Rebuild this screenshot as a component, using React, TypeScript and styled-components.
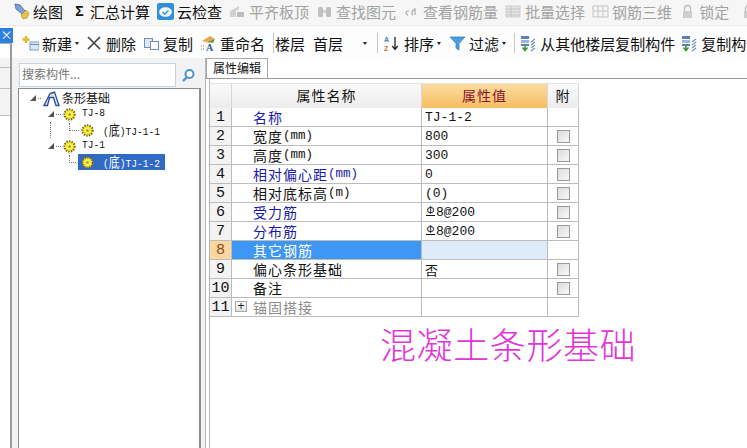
import React from "react";
import styled, { createGlobalStyle } from "styled-components";

const cjk = `"Noto Sans CJK SC", "Liberation Sans", sans-serif`;
const mono = `"Liberation Mono", "Noto Sans CJK SC", monospace`;

const Global = createGlobalStyle`
  html, body { margin: 0; padding: 0; background: #fff; }
  body { width: 747px; height: 448px; overflow: hidden; font-family: ${cjk}; color: #111; }
`;

const Page = styled.div`
  width: 747px;
  height: 448px;
  display: flex;
  flex-direction: column;
  overflow: hidden;
`;

const TopBar = styled.div`
  height: 25px;
  flex: none;
  display: flex;
  align-items: center;
  box-sizing: border-box;
  padding: 0 0 3px 13px;
  background: #f6f6f6;
  white-space: nowrap;
  font-size: 15px;
  line-height: 1;
`;

const TopItem = styled.div<{ $off?: boolean; $gap?: number }>`
  flex: none;
  display: flex;
  align-items: center;
  gap: 3px;
  margin-right: ${(p) => p.$gap ?? 7}px;
  color: ${(p) => (p.$off ? "#a2a2a2" : "#111")};
`;

const Sigma = styled.span`
  width: 15px;
  text-align: center;
  font-family: "Liberation Sans", sans-serif;
  font-weight: 700;
  font-size: 14px;
`;

const ToolBar = styled.div`
  height: 33px;
  flex: none;
  display: flex;
  align-items: center;
  box-sizing: border-box;
  padding-top: 2px;
  background: #fdfdfd;
  white-space: nowrap;
  font-size: 15px;
  line-height: 1;
  border-top: 1px solid #ececec;
`;

const Stub = styled.div`
  width: 13px;
  flex: none;
  align-self: stretch;
  display: flex;
  flex-direction: column;
  margin-right: 8px;
`;

const CloseTab = styled.div`
  height: 15px;
  flex: none;
  background: #2f7fe0;
  color: #fff;
  font-size: 12px;
  line-height: 14px;
  text-align: center;
`;

const StubBox = styled.div`
  flex: 1;
  width: 12px;
  box-sizing: border-box;
  border-top: 1px solid #b0b0b0;
  border-right: 2px solid #9c9c9c;
  background: #fff;
`;

const ToolItem = styled.div<{ $gap?: number }>`
  flex: none;
  display: flex;
  align-items: center;
  gap: 3px;
  margin-right: ${(p) => p.$gap ?? 7}px;
`;

const Caret = styled.span`
  width: 0;
  height: 0;
  border-left: 2.5px solid transparent;
  border-right: 2.5px solid transparent;
  border-top: 3px solid #222;
`;

const Sep = styled.span<{ $after: number }>`
  flex: none;
  width: 1px;
  height: 20px;
  background: #c8c8c8;
  margin-right: ${(p) => p.$after}px;
`;

const Body = styled.div`
  flex: 1;
  display: flex;
  min-height: 0;
`;

const LeftGutter = styled.div`
  width: 12px;
  flex: none;
  box-sizing: border-box;
  background: #fff;
  border-right: 2px solid #9c9c9c;
`;

const GutterRow = styled.div<{ $h: number }>`
  height: ${(p) => p.$h}px;
  box-sizing: border-box;
  background: #f3f3f3;
  border-bottom: 1px solid #bdbdbd;
`;

const Side = styled.div`
  width: 193px;
  flex: none;
  padding: 5px 4px 0 6px;
  box-sizing: border-box;
  background: #f2f2f2;
  display: flex;
  flex-direction: column;
`;

const SearchRow = styled.div`
  display: flex;
  height: 25px;
  flex: none;
`;

const SearchInput = styled.div`
  width: 157px;
  height: 24px;
  margin-left: 1px;
  background: #fff;
  border: 1px solid #c6d2de;
  box-sizing: border-box;
  color: #777;
  font-size: 12px;
  line-height: 20px;
  padding-left: 2px;
`;

const SearchBtn = styled.div`
  flex: 1;
  display: flex;
  align-items: center;
  justify-content: center;
`;

const Tree = styled.div`
  flex: 1;
  background: #fff;
  border-left: 1px solid #8d8d8d;
  border-top: 1px solid #8d8d8d;
  border-right: 2px solid #8d8d8d;
  padding-top: 1px;
`;

const TreeRow = styled.div<{ $indent: number; $trunk?: boolean }>`
  height: 16px;
  position: relative;
  padding-left: ${(p) => p.$indent}px;
  display: flex;
  align-items: center;
  white-space: nowrap;
  &::before {
    content: "";
    display: ${(p) => (p.$trunk ? "block" : "none")};
    position: absolute;
    left: 31px;
    top: 0;
    height: 16px;
    border-left: 1px dotted #777;
  }
`;

const Arrow = styled.span`
  flex: none;
  width: 0;
  height: 0;
  border-left: 6px solid transparent;
  border-bottom: 6px solid #555;
  margin-right: 2px;
`;

const Dots = styled.span<{ $w: number; $up?: boolean }>`
  flex: none;
  position: relative;
  width: ${(p) => p.$w}px;
  border-top: 1px dotted #777;
  margin-right: 2px;
  &::before {
    content: "";
    display: ${(p) => (p.$up ? "block" : "none")};
    position: absolute;
    left: 0;
    bottom: 0;
    height: 8px;
    border-left: 1px dotted #777;
  }
`;

const RootLabel = styled.span`
  margin-left: 2px;
  font-size: 12px;
  line-height: 1;
`;

const TreeLabel = styled.span<{ $left: number }>`
  margin-left: ${(p) => p.$left}px;
  font-family: ${mono};
  font-size: 9.6px;
  line-height: 1;
  transform: scaleY(1.2);
`;

const SelectedRow = styled.span`
  display: inline-flex;
  align-items: center;
  height: 16px;
  padding: 0 5px 0 3px;
  background: #316ac5;
  color: #fff;
`;

const Under = styled.span`
  font-family: ${cjk};
  font-size: 11px;
`;

const Main = styled.div`
  flex: 1;
  display: flex;
  flex-direction: column;
  background: #fff;
  border-left: 1px solid #b5b5b5;
  min-width: 0;
`;

const TabStrip = styled.div`
  height: 21px;
  flex: none;
  box-sizing: border-box;
  display: flex;
  align-items: flex-end;
  border-bottom: 1px solid #9a9a9a;
`;

const Tab = styled.div`
  width: 62px;
  height: 20px;
  box-sizing: border-box;
  text-align: center;
  line-height: 18px;
  font-size: 12px;
  border: 1px solid #aaa;
  border-bottom: none;
  background: #fff;
`;

const Pane = styled.div`
  flex: 1;
  margin-left: 3px;
  border-left: 1px solid #b5b5b5;
  padding-top: 4px;
`;

const Grid = styled.div`
  width: 369px;
  display: grid;
  grid-template-columns: 22px 190px 126px 31px;
  grid-template-rows: 24px repeat(11, 19px);
  border-top: 1px solid #e4e4e4;
  margin-bottom: 6px;
`;

const HeadCell = styled.div<{ $active?: boolean }>`
  display: flex;
  align-items: center;
  justify-content: center;
  padding-bottom: 2px;
  font-size: 14px;
  line-height: 1;
  letter-spacing: 1px;
  box-sizing: border-box;
  border-right: 1px solid #d6d6d6;
  color: ${(p) => (p.$active ? "#8a1430" : "#111")};
  background: ${(p) =>
    p.$active
      ? "linear-gradient(#fbdc9f, #f6bd62)"
      : "linear-gradient(#fafafa, #ececec)"};
`;

const NumCell = styled.div<{ $active?: boolean }>`
  display: flex;
  align-items: center;
  justify-content: center;
  font-size: 15px;
  font-family: "Liberation Mono", monospace;
  box-sizing: border-box;
  background: ${(p) => (p.$active ? "#fad7a0" : "#f3f3f3")};
  color: ${(p) => (p.$active ? "#8a4a10" : "#111")};
  border-right: 1px solid #bcbcbc;
  border-bottom: 1px solid #bcbcbc;
`;

const NameCell = styled.div<{ $tone?: string; $active?: boolean }>`
  position: relative;
  display: flex;
  align-items: center;
  padding-left: 21px;
  box-sizing: border-box;
  font-size: 14px;
  line-height: 1;
  letter-spacing: 1px;
  white-space: nowrap;
  color: ${(p) => (p.$active ? "#fff" : p.$tone ?? "#111")};
  background: ${(p) => (p.$active ? "#3f97f5" : "#fff")};
  border-right: 1px solid #bcbcbc;
  border-bottom: 1px solid #bcbcbc;
`;

const Unit = styled.span`
  font-family: "Liberation Mono", monospace;
  font-size: 12.5px;
  letter-spacing: 0;
`;

const Expander = styled.span`
  position: absolute;
  left: 3px;
  top: 3px;
  width: 12px;
  height: 11px;
  box-sizing: border-box;
  border: 1px solid #a8a8a8;
  background: linear-gradient(#fff, #e2e2e2);
  color: #111;
  font-size: 12px;
  line-height: 8px;
  letter-spacing: 0;
  text-align: center;
  font-family: "Liberation Sans", sans-serif;
`;

const ValueCell = styled.div<{ $active?: boolean }>`
  display: flex;
  align-items: center;
  padding-left: 3px;
  box-sizing: border-box;
  font-size: 13px;
  font-family: ${mono};
  background: ${(p) => (p.$active ? "#ddebfb" : "#fff")};
  border-right: 1px solid #bcbcbc;
  border-bottom: 1px solid #bcbcbc;
  white-space: nowrap;
`;

const AttachCell = styled.div`
  display: flex;
  align-items: center;
  justify-content: center;
  box-sizing: border-box;
  border-right: 1px solid #bcbcbc;
  border-bottom: 1px solid #bcbcbc;
`;

const Check = styled.span`
  width: 13px;
  height: 13px;
  box-sizing: border-box;
  border: 1px solid #9a9a9a;
  background: linear-gradient(135deg, #dcdcdc, #f8f8f8);
`;

const RebarMark = styled.span`
  width: 9px;
  height: 9px;
  margin: 0 1px 3px 1px;
  font-family: "Liberation Sans", sans-serif;
  font-size: 10px;
  line-height: 9px;
  text-align: center;
  border-bottom: 1px solid #111;
`;

const Caption = styled.div`
  margin-left: 170px;
  color: #e235d8;
  font-family: "Noto Sans CJK SC", serif;
  font-size: 36px;
  font-weight: 300;
  letter-spacing: 0.6px;
  line-height: 40px;
  white-space: nowrap;
`;

const Flower = () => (
  <svg width="13" height="13" viewBox="0 0 13 13">
    <circle cx="6.5" cy="6.5" r="5.2" fill="#f6e83a" stroke="#6f6410" strokeWidth="2" strokeDasharray="1.4 1.2" />
    <circle cx="6.5" cy="6.5" r="3" fill="#fbf04e" />
    <circle cx="6.5" cy="6.5" r="1.3" fill="#a8962a" />
  </svg>
);

const FootingIcon = () => (
  <svg width="17" height="17" viewBox="0 0 17 17">
    <path d="M1 15.5h3.5l2-8h4l2.5 8H16L11.5 2 7 3.5z" fill="#dfe9f6" stroke="#2a4f96" strokeWidth="1.3" />
    <path d="M8 4l3-1.5" stroke="#2a4f96" />
  </svg>
);

const PencilIcon = () => (
  <svg width="17" height="17" viewBox="0 0 17 17">
    <path d="M2 1l5 1 5 6-3 3-6-5z" fill="#7f9fd8" stroke="#47659f" strokeWidth="0.8" />
    <path d="M8 12l5-5 3 3-2 5-4 1z" fill="#e9c24a" stroke="#a88a2a" strokeWidth="0.6" />
  </svg>
);

const CloudIcon = () => (
  <svg width="17" height="17" viewBox="0 0 17 17">
    <rect width="17" height="17" rx="2" fill="#2f92d8" />
    <ellipse cx="8.5" cy="9" rx="6.4" ry="4.8" fill="#f2f8fd" />
    <path d="M5.5 9l2.2 2 3.8-3.6" fill="none" stroke="#2f92d8" strokeWidth="1.4" />
  </svg>
);

const GrayIcon = ({ kind }: { kind: string }) => (
  <svg width="17" height="15" viewBox="0 0 17 15">
    {kind === "board" && (
      <>
        <path d="M1 13V7l9-5v3l-3 2v6z" fill="#d2d2d2" />
        <rect x="8" y="8" width="7" height="5" fill="#bdbdbd" />
      </>
    )}
    {kind === "binoc" && (
      <>
        <rect x="2" y="3" width="5" height="10" rx="1.5" fill="#c0c0c0" />
        <rect x="10" y="3" width="5" height="10" rx="1.5" fill="#c0c0c0" />
        <rect x="7" y="6" width="3" height="3" fill="#d4d4d4" />
      </>
    )}
    {kind === "rebar" && <path d="M5 11c-3 0-2-5 1-4M10 11c-2-1-1-5 2-6v6" fill="none" stroke="#b5b5b5" strokeWidth="1.4" />}
    {kind === "batch" && (
      <>
        <rect x="1" y="2" width="14" height="11" fill="#e6e6e6" stroke="#cdcdcd" />
        <path d="M1 5h14M1 8h14M1 11h14M6 2v11" stroke="#c4c4c4" />
      </>
    )}
    {kind === "grid3d" && (
      <path d="M1 2h15v11H1zM6 2v11M11 2v11M1 7h15" fill="none" stroke="#c4c4c4" />
    )}
    {kind === "lock" && (
      <>
        <path d="M5.5 7V4.5a3 3 0 0 1 6 0V7" fill="none" stroke="#bdbdbd" strokeWidth="1.3" />
        <rect x="4" y="7" width="9" height="7" fill="#cdcdcd" />
      </>
    )}
  </svg>
);

const NewIcon = () => (
  <svg width="18" height="16" viewBox="0 0 18 16">
    <path d="M5 1v7M1.5 4.5h7" stroke="#e3b52a" strokeWidth="2.4" />
    <rect x="9" y="7" width="9" height="8" fill="#dbe8f6" stroke="#7d9ec6" />
    <path d="M9 9.5h9" stroke="#6f8fb8" />
  </svg>
);

const CrossIcon = () => (
  <svg width="17" height="15" viewBox="0 0 17 15">
    <path d="M2 1l12 12M14 1L2 13" stroke="#444" strokeWidth="1.7" />
  </svg>
);

const CopyIcon = () => (
  <svg width="17" height="13" viewBox="0 0 17 13">
    <rect x="1.5" y="1.5" width="8" height="9" fill="#dde8f6" stroke="#6f8fb8" />
    <rect x="7.5" y="4.5" width="8" height="8" fill="#fff" stroke="#6f8fb8" />
  </svg>
);

const RenameIcon = () => (
  <svg width="17" height="16" viewBox="0 0 17 16">
    <path d="M2 6l8-5 5 3-6 4z" fill="#e3a94a" />
    <path d="M8 7l7-3-2 4z" fill="#5c9a52" />
    <text x="6" y="15.5" fontSize="10" fontFamily="Liberation Serif, serif" fontWeight="700" fill="#2a5aa8">A</text>
    <path d="M1 11h3M1 14h3" stroke="#888" strokeDasharray="1 1" />
  </svg>
);

const SortIcon = () => (
  <svg width="18" height="17" viewBox="0 0 18 17">
    <text x="1" y="7" fontSize="7" fontFamily="Liberation Sans, sans-serif" fontWeight="700" fill="#4a78b8">A</text>
    <text x="1" y="16" fontSize="7" fontFamily="Liberation Sans, sans-serif" fontWeight="700" fill="#c0752a">Z</text>
    <path d="M12 2v12M9.3 11l2.7 3.5 2.7-3.5" fill="none" stroke="#222" strokeWidth="1.3" />
  </svg>
);

const FilterIcon = () => (
  <svg width="17" height="15" viewBox="0 0 17 15">
    <path d="M1 1h15L10 7.5V14l-3-2V7.5z" fill="#4d9fe0" stroke="#2f76b8" strokeWidth="0.7" />
  </svg>
);

const CopyFloorIcon = () => (
  <svg width="17" height="17" viewBox="0 0 17 17">
    <rect x="1" y="1" width="8" height="3" fill="#5a7fb4" />
    <rect x="1" y="5" width="8" height="3" fill="#9ab6d6" />
    <rect x="1" y="9" width="8" height="2" fill="#5a7fb4" />
    <path d="M5 11v3M2.5 12.5L5 15.5l2.5-3" fill="none" stroke="#3a9a3a" strokeWidth="1.6" />
    <path d="M11 7l4-3M11 10l4-3M11 13l4-3M11 16l4-3" stroke="#6f93bb" strokeWidth="1.2" />
  </svg>
);

const SearchGlass = () => (
  <svg width="15" height="15" viewBox="0 0 15 15">
    <circle cx="8.5" cy="6" r="4" fill="#fff" stroke="#4d93c9" strokeWidth="2" />
    <path d="M5.5 9.5L2 13" stroke="#4d93c9" strokeWidth="2.4" />
  </svg>
);

type Row = { name: string; unit?: string; value?: string; rebar?: boolean; check?: boolean; tone?: string };

const blue = "#1a1aa6";
const rows: Row[] = [
  { name: "名称", value: "TJ-1-2", tone: blue },
  { name: "宽度", unit: "(mm)", value: "800", check: true },
  { name: "高度", unit: "(mm)", value: "300", check: true },
  { name: "相对偏心距", unit: "(mm)", value: "0", check: true, tone: blue },
  { name: "相对底标高", unit: "(m)", value: "(0)", check: true },
  { name: "受力筋", value: "8@200", rebar: true, check: true, tone: blue },
  { name: "分布筋", value: "8@200", rebar: true, check: true, tone: blue },
  { name: "其它钢筋" },
  { name: "偏心条形基础", value: "否", check: true },
  { name: "备注", check: true },
];

export default function App() {
  return (
    <Page>
      <Global />
      <TopBar>
        <TopItem $gap={9}><PencilIcon />绘图</TopItem>
        <TopItem><Sigma>Σ</Sigma>汇总计算</TopItem>
        <TopItem><CloudIcon />云检查</TopItem>
        <TopItem $off><GrayIcon kind="board" />平齐板顶</TopItem>
        <TopItem $off><GrayIcon kind="binoc" />查找图元</TopItem>
        <TopItem $off><GrayIcon kind="rebar" />查看钢筋量</TopItem>
        <TopItem $off><GrayIcon kind="batch" />批量选择</TopItem>
        <TopItem $off><GrayIcon kind="grid3d" />钢筋三维</TopItem>
        <TopItem $off $gap={11}><GrayIcon kind="lock" />锁定</TopItem>
        <TopItem $off><GrayIcon kind="lock" /></TopItem>
      </TopBar>
      <ToolBar>
        <Stub>
          <CloseTab>×</CloseTab>
          <StubBox />
        </Stub>
        <ToolItem><NewIcon />新建<Caret /></ToolItem>
        <ToolItem><CrossIcon />删除</ToolItem>
        <ToolItem><CopyIcon />复制</ToolItem>
        <ToolItem $gap={8}><RenameIcon />重命名</ToolItem>
        <Sep $after={1} />
        <ToolItem $gap={8}>楼层</ToolItem>
        <ToolItem $gap={20}>首层</ToolItem>
        <ToolItem $gap={10}><Caret /></ToolItem>
        <Sep $after={5} />
        <ToolItem $gap={8}><SortIcon />排序<Caret /></ToolItem>
        <ToolItem $gap={8}><FilterIcon />过滤<Caret /></ToolItem>
        <Sep $after={5} />
        <ToolItem $gap={6}><CopyFloorIcon />从其他楼层复制构件</ToolItem>
        <ToolItem><CopyFloorIcon />复制构件</ToolItem>
      </ToolBar>
      <Body>
        <LeftGutter>
          <GutterRow $h={10} />
          <GutterRow $h={21} />
          <GutterRow $h={27} />
        </LeftGutter>
        <Side>
          <SearchRow>
            <SearchInput>搜索构件...</SearchInput>
            <SearchBtn><SearchGlass /></SearchBtn>
          </SearchRow>
          <Tree>
            <TreeRow $indent={11}>
              <Arrow /><Dots $w={3} /><FootingIcon /><RootLabel>条形基础</RootLabel>
            </TreeRow>
            <TreeRow $indent={29}>
              <Arrow /><Dots $w={5} /><Flower /><TreeLabel $left={6}>TJ-8</TreeLabel>
            </TreeRow>
            <TreeRow $indent={50} $trunk>
              <Dots $w={10} $up /><Flower /><TreeLabel $left={9}>(<Under>底</Under>)TJ-1-1</TreeLabel>
            </TreeRow>
            <TreeRow $indent={29}>
              <Arrow /><Dots $w={5} /><Flower /><TreeLabel $left={6}>TJ-1</TreeLabel>
            </TreeRow>
            <TreeRow $indent={50}>
              <Dots $w={7} $up />
              <SelectedRow>
                <Flower /><TreeLabel $left={9}>(<Under>底</Under>)TJ-1-2</TreeLabel>
              </SelectedRow>
            </TreeRow>
          </Tree>
        </Side>
        <Main>
          <TabStrip><Tab>属性编辑</Tab></TabStrip>
          <Pane>
            <Grid>
              <HeadCell />
              <HeadCell>属性名称</HeadCell>
              <HeadCell $active>属性值</HeadCell>
              <HeadCell>附</HeadCell>
              {rows.map((r, i) => (
                <React.Fragment key={r.name}>
                  <NumCell $active={i === 7}>{i + 1}</NumCell>
                  <NameCell $tone={r.tone} $active={i === 7}>
                    {r.name}
                    {r.unit && <Unit>{r.unit}</Unit>}
                  </NameCell>
                  <ValueCell $active={i === 7}>
                    {r.rebar && <RebarMark>Φ</RebarMark>}
                    {r.value}
                  </ValueCell>
                  <AttachCell>{r.check && <Check />}</AttachCell>
                </React.Fragment>
              ))}
              <NumCell>11</NumCell>
              <NameCell $tone="#8c8c8c">
                <Expander>+</Expander>锚固搭接
              </NameCell>
              <ValueCell />
              <AttachCell />
            </Grid>
            <Caption>混凝土条形基础</Caption>
          </Pane>
        </Main>
      </Body>
    </Page>
  );
}
